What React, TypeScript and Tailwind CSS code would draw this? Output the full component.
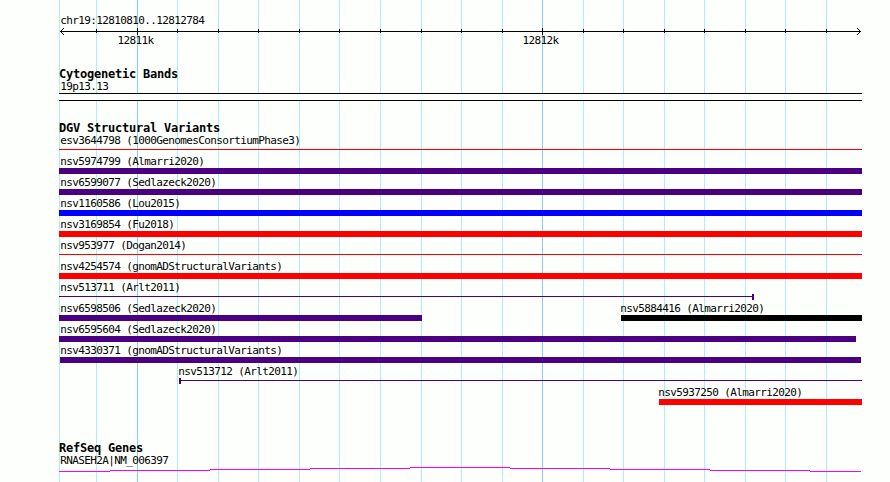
const gridLines = [59, 96, 137, 177, 218, 258, 299, 339, 380, 421, 461, 502, 542, 583, 623, 664, 704, 745, 785, 826];
const majorLines = [137, 542];

const LEFT = 59;

type Feature = { label: string; start: number; end: number; color: string; thin?: boolean; cap?: 'left' | 'right' };

const variants: Feature[][] = [
  [{ label: 'esv3644798 (1000GenomesConsortiumPhase3)', start: 59, end: 862, color: 'bg-[#ff0000]', thin: true }],
  [{ label: 'nsv5974799 (Almarri2020)', start: 59, end: 862, color: 'bg-[#4b0082]' }],
  [{ label: 'nsv6599077 (Sedlazeck2020)', start: 59, end: 862, color: 'bg-[#4b0082]' }],
  [{ label: 'nsv1160586 (Lou2015)', start: 59, end: 862, color: 'bg-[#0000ff]' }],
  [{ label: 'nsv3169854 (Fu2018)', start: 59, end: 862, color: 'bg-[#ff0000]' }],
  [{ label: 'nsv953977 (Dogan2014)', start: 59, end: 862, color: 'bg-[#ff0000]', thin: true }],
  [{ label: 'nsv4254574 (gnomADStructuralVariants)', start: 59, end: 862, color: 'bg-[#ff0000]' }],
  [{ label: 'nsv513711 (Arlt2011)', start: 59, end: 754, color: 'bg-[#4b0082]', thin: true, cap: 'right' }],
  [
    { label: 'nsv6598506 (Sedlazeck2020)', start: 59, end: 422, color: 'bg-[#4b0082]' },
    { label: 'nsv5884416 (Almarri2020)', start: 621, end: 862, color: 'bg-black' },
  ],
  [{ label: 'nsv6595604 (Sedlazeck2020)', start: 59, end: 856, color: 'bg-[#4b0082]' }],
  [{ label: 'nsv4330371 (gnomADStructuralVariants)', start: 60, end: 861, color: 'bg-[#4b0082]' }],
  [{ label: 'nsv513712 (Arlt2011)', start: 179, end: 862, color: 'bg-[#4b0082]', thin: true, cap: 'left' }],
  [{ label: 'nsv5937250 (Almarri2020)', start: 659, end: 862, color: 'bg-[#ff0000]' }],
];

const textClass = 'block whitespace-pre text-[11px] leading-[13px] tracking-[-0.622px] text-black';

const Heading = ({ children }: { children: string }) => (
  <h2 className="whitespace-pre pl-[59px] text-[12px] font-bold leading-[13px] tracking-[-0.224px] text-black">
    {children}
  </h2>
);

const Grid = () => (
  <div className="absolute inset-0">
    {gridLines.map((x) => (
      <div
        key={x}
        className={`absolute inset-y-0 w-px ${majorLines.includes(x) ? 'bg-[#87ceeb]' : 'bg-[#afeeee]'}`}
        style={{ left: x }}
      />
    ))}
  </div>
);

const Ruler = () => (
  <svg className="block h-[9px] w-[890px]" viewBox="0 0 890 9" shapeRendering="crispEdges">
    <path d="M60 3h801v1H60z" />
    {gridLines.slice(1).map((x) => (
      <rect
        key={x}
        x={x}
        y={majorLines.includes(x) ? 0 : 1}
        width="1"
        height={majorLines.includes(x) ? 7 : 4}
      />
    ))}
    <path d="M61 2h1v1h-1zM62 1h1v1h-1zM63 0h1v1h-1zM61 4h1v1h-1zM62 5h1v1h-1zM63 6h1v1h-1z" />
    <path d="M859 2h1v1h-1zM858 1h1v1h-1zM857 0h1v1h-1zM859 4h1v1h-1zM858 5h1v1h-1zM857 6h1v1h-1z" />
  </svg>
);

const VariantRow = ({ features }: { features: Feature[] }) => (
  <div className="flex h-[21px]">
    {features.map((f, i) => {
      const previousEnd = i === 0 ? 0 : features[i - 1].end;
      const labelShift = f.start === LEFT ? 1.3 : f.start === 60 ? 0.3 : -0.7;
      return (
        <div key={f.label} className="shrink-0" style={{ marginLeft: f.start - previousEnd, width: f.end - f.start }}>
          <span className={textClass} style={{ marginLeft: labelShift }}>
            {f.label}
          </span>
          <div className="flex h-[6px] items-start">
            {f.cap === 'left' && <div className={`h-[6px] w-[2px] ${f.color}`} />}
            <div className={`grow ${f.thin ? 'mt-[2px] h-px' : 'h-[6px]'} ${f.color}`} />
            {f.cap === 'right' && <div className={`h-[6px] w-[2px] ${f.color}`} />}
          </div>
        </div>
      );
    })}
  </div>
);

const App = () => {
  return (
    <main className="relative h-[482px] w-[890px] overflow-hidden bg-[#fdfffc] font-['DejaVu_Sans_Mono',monospace]">
      <Grid />
      <div className="relative flex flex-col pt-[14px]">
        <span className={`${textClass} pl-[60.3px]`}>chr19:12810810..12812784</span>
        <div className="mt-px">
          <Ruler />
        </div>
        <div className="-mt-[3px] flex">
          <span className={`${textClass} ml-[117.6px] w-[405px]`}>12811k</span>
          <span className={textClass}>12812k</span>
        </div>

        <div className="mt-[21px]">
          <Heading>Cytogenetic Bands</Heading>
          <span className={`${textClass} -mt-px pl-[60.3px]`}>19p13.13</span>
          <div className="ml-[59px] h-[8px] w-[803px] border-y border-black bg-[#fdfffc]" />
        </div>

        <div className="mt-[21px]">
          <Heading>DGV Structural Variants</Heading>
          <div className="-mt-px">
            {variants.map((row) => (
              <VariantRow key={row[0].label} features={row} />
            ))}
          </div>
        </div>

        <div className="mt-[35px]">
          <Heading>RefSeq Genes</Heading>
          <span className={`${textClass} -mt-px pl-[60.3px]`}>RNASEH2A|NM_006397</span>
          <svg className="block h-[6px] w-[890px]" viewBox="0 0 890 6" shapeRendering="crispEdges">
            <path
              fill="#ff00ff"
              d="M59 4h51v1H59zM110 3h100v1H110zM210 2h100v1H210zM310 1h100v1H310zM410 0h100v1H410zM510 1h100v1H510zM610 2h100v1H610zM710 3h100v1H710zM810 4h51v1H810z"
            />
          </svg>
        </div>
      </div>
    </main>
  );
};

export default App;
